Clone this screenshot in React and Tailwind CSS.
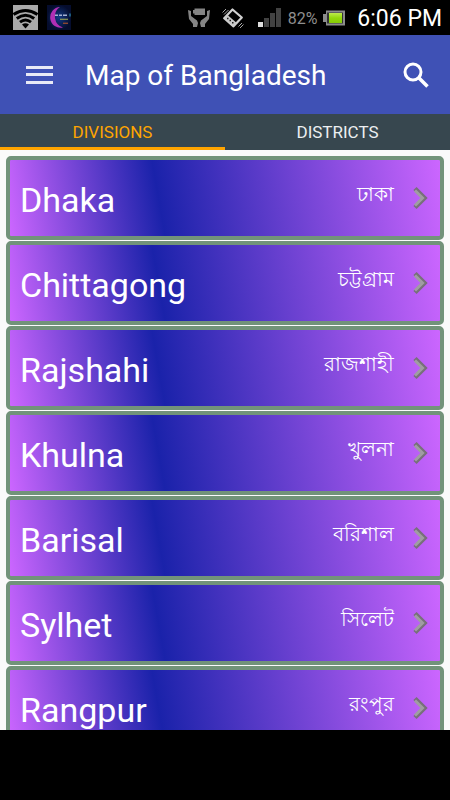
const divisions = [
  { name: "Dhaka", local: "ঢাকা" },
  { name: "Chittagong", local: "চট্টগ্রাম" },
  { name: "Rajshahi", local: "রাজশাহী" },
  { name: "Khulna", local: "খুলনা" },
  { name: "Barisal", local: "বরিশাল" },
  { name: "Sylhet", local: "সিলেট" },
  { name: "Rangpur", local: "রংপুর" },
];

function WifiIcon() {
  return (
    <svg width="25" height="25" viewBox="0 0 25 25" aria-hidden="true">
      <rect width="25" height="25" fill="#aaaaaa" />
      <g fill="none" stroke="#000" strokeWidth="3">
        <path d="M0.500 9.500Q12.5 1.500 24.500 9.500" />
        <path d="M3.800 13.500Q12.5 7 21.200 13.500" />
        <path d="M7 17.200Q12.5 12.8 18 17.200" />
      </g>
      <path d="M9 19.500Q12.5 16.800 16 19.500L12.5 23.5z" fill="#000" />
    </svg>
  );
}

function MoonIcon() {
  return (
    <svg width="24" height="25" viewBox="0 0 24 25" aria-hidden="true">
      <defs>
        <radialGradient id="night">
          <stop offset="0" stopColor="#123a86" />
          <stop offset="1" stopColor="#050d2e" />
        </radialGradient>
      </defs>
      <rect width="24" height="25" fill="url(#night)" />
      <path d="M13 2A10.4 10.4 0 1 0 16 22.500A11.500 11.500 0 0 1 13 2z" fill="#b02fb4" />
      <path d="M8 10.3h3M12 10.3h3M16 10.3h4" stroke="#a5b2d4" strokeWidth="1.500" />
      <path d="M13 14.3h8" stroke="#8f9a52" strokeWidth="1.200" />
      <path d="M16 18.3h5" stroke="#8b4630" strokeWidth="1.400" />
      <path d="M22 10h2" stroke="#1c5a7c" strokeWidth="3" />
    </svg>
  );
}

function HandsIcon() {
  return (
    <svg width="22" height="19" viewBox="0 0 22 19" fill="#858585" aria-hidden="true">
      <path d="M5 2h1.500V0.500H17V7H6.500V5.500H5z" />
      <path d="M0 2l3 1v5l6 4.500l1 2.500l-1 4H5v-3L1 11z" />
      <path d="M22 2l-3 1v5l-6 4.500l-1 2.500l1 4h4v-3l4-5z" />
    </svg>
  );
}

function VibrateIcon() {
  return (
    <svg width="22" height="20" viewBox="0 0 22 20" fill="none" aria-hidden="true">
      <path d="M10.500 1.500L19.800 9.500L11.500 18.300L2.200 10.200z" fill="#000" stroke="#d0d0d0" strokeWidth="2.200" strokeLinejoin="round" />
      <path d="M2.500 10.200L5.500 7L14.800 15L11.500 18.300z" fill="#c8c8c8" />
      <path d="M5 10.500h1.500M7.500 12.500h1.500M10 14.800h1.500" stroke="#1c1c1c" strokeWidth="1.500" />
      <path d="M0.500 4.500L4 1M2 6.500L6.500 2M16.500 18.500L20 15M18 20L21.500 16.500" stroke="#a8a8a8" />
    </svg>
  );
}

function SignalIcon() {
  return (
    <svg width="23" height="19" viewBox="0 0 23 19" aria-hidden="true">
      <rect x="0" y="14" width="5" height="5" fill="#dedede" />
      <rect x="6" y="10" width="5" height="9" fill="#424242" />
      <rect x="12" y="5" width="5" height="14" fill="#424242" />
      <rect x="18" y="0" width="5" height="19" fill="#424242" />
    </svg>
  );
}

function BatteryIcon() {
  return (
    <svg width="22" height="16" viewBox="0 0 22 16" aria-hidden="true">
      <defs>
        <linearGradient id="charge" x1="0" y1="0" x2="0" y2="1">
          <stop offset="0" stopColor="#bdea4c" />
          <stop offset="0.5" stopColor="#93d80c" />
          <stop offset="1" stopColor="#86cc05" />
        </linearGradient>
      </defs>
      <path d="M3 0.500H22V15.500H3V12H0V4H3z" fill="#8c8c8c" />
      <rect x="4" y="2.500" width="16" height="11" fill="#343434" />
      <rect x="6" y="3" width="13" height="10" fill="url(#charge)" />
    </svg>
  );
}

function StatusBar() {
  return (
    <div className="flex h-[35px] items-center bg-black pr-2 pl-[13px] text-[#8e8e8e]">
      <div className="flex flex-1 items-center gap-[9px]">
        <WifiIcon />
        <MoonIcon />
      </div>
      <div className="flex items-center">
        <HandsIcon />
        <span className="ml-3 flex"><VibrateIcon /></span>
        <span className="ml-[14px] flex"><SignalIcon /></span>
        <span className="ml-[7px] pt-[2px] text-base">82%</span>
        <span className="ml-[6px] flex"><BatteryIcon /></span>
        <span className="ml-3 pt-[2px] text-[23px] leading-8 text-white">6:06 PM</span>
      </div>
    </div>
  );
}

function AppBar() {
  return (
    <header className="flex h-[79px] items-center bg-[#3f51b5] pr-5 pl-[26px] text-white">
      <button type="button" aria-label="Open menu" className="mr-8">
        <svg width="27" height="20" viewBox="0 0 27 20" fill="#e8eaf6">
          <rect y="1" width="27" height="3" />
          <rect y="8" width="27" height="3" />
          <rect y="16" width="27" height="3" />
        </svg>
      </button>
      <h1 className="flex-1 pt-[2px] text-[28px] leading-8">Map of Bangladesh</h1>
      <button type="button" aria-label="Search">
        <svg width="28" height="28" viewBox="0 0 28 28" fill="none" stroke="#fff" strokeWidth="3">
          <circle cx="11" cy="11" r="8" />
          <path d="M16.500 16.500L25.500 25.500" strokeWidth="3.600" />
        </svg>
      </button>
    </header>
  );
}

function Chevron() {
  return (
    <svg width="15" height="24" viewBox="0 0 15 24" fill="none" aria-hidden="true">
      <path d="M2 2.500L11.500 12L2 21.500" stroke="#77707a" strokeWidth="4.500" />
      <path d="M2 4.500L9.500 12L2 19.500" stroke="#a09da2" strokeWidth="3" />
    </svg>
  );
}

export default function App() {
  return (
    <div className="flex h-screen flex-col overflow-hidden bg-black font-['Roboto','Noto_Sans',sans-serif]">
      <StatusBar />
      <AppBar />
      <div role="tablist" className="grid h-9 shrink-0 grid-cols-2 bg-[#37474f] text-[17px]">
        <button type="button" role="tab" aria-selected="true" className="border-b-3 border-[#ffa500] pt-[5px] text-[#ffa500]">
          DIVISIONS
        </button>
        <button type="button" role="tab" aria-selected="false" className="border-b-3 border-transparent pt-[5px] text-[#eceff1]">
          DISTRICTS
        </button>
      </div>
      <main className="mb-[70px] min-h-0 flex-1 overflow-hidden bg-[#fafafa] px-[6px] pt-[6px]">
        <ul className="flex flex-col gap-px">
          {divisions.map((d) => (
            <li key={d.name}>
              <a
                href="#"
                className="flex h-[84px] rounded-[5px] border-4 border-[#72937a] bg-[linear-gradient(80deg,#cc66ff_0%,#1a22aa_35%,#cc66ff_100%)] bg-origin-padding pr-3 pl-[10px] text-white"
              >
                <span className="flex-1 self-center pt-[3px] text-[34px] leading-10">{d.name}</span>
                <span lang="bn" className="pt-[22px] text-xl leading-6">{d.local}</span>
                <span className="ml-[19px] self-center"><Chevron /></span>
              </a>
            </li>
          ))}
        </ul>
      </main>
    </div>
  );
}
